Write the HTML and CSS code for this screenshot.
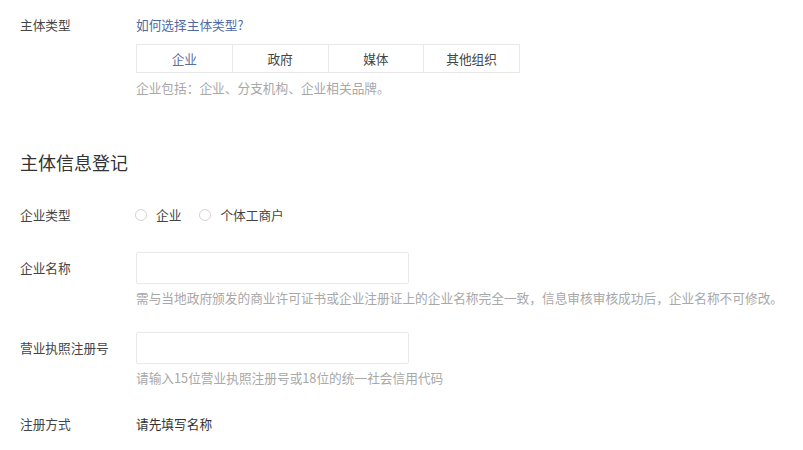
FILE: index.html
```html
<!DOCTYPE html>
<html lang="zh">
<head>
    <meta charset="UTF-8">
    <meta name="viewport" content="width=device-width, initial-scale=1.0">
    <title>主体信息登记</title>
    <link rel="stylesheet" href="styles.css">
</head>
<body>
    <div class="page">
        <div class="row row-type">
            <div class="label">主体类型</div>
            <div class="field">
                <a class="link" href="#">如何选择主体类型?</a>
                <div class="tabs">
                    <div class="tab active">企业</div>
                    <div class="tab">政府</div>
                    <div class="tab">媒体</div>
                    <div class="tab">其他组织</div>
                </div>
                <p class="hint">企业包括：企业、分支机构、企业相关品牌。</p>
            </div>
        </div>

        <h2 class="title">主体信息登记</h2>

        <div class="row row-radio">
            <div class="label">企业类型</div>
            <div class="field radios">
                <label class="radio"><span class="circle"></span>企业</label>
                <label class="radio"><span class="circle"></span>个体工商户</label>
            </div>
        </div>

        <div class="row row-input">
            <div class="label">企业名称</div>
            <div class="field">
                <input class="input" type="text">
                <p class="hint">需与当地政府颁发的商业许可证书或企业注册证上的企业名称完全一致，信息审核审核成功后，企业名称不可修改。</p>
            </div>
        </div>

        <div class="row row-input row-license">
            <div class="label">营业执照注册号</div>
            <div class="field">
                <input class="input" type="text">
                <p class="hint">请输入15位营业执照注册号或18位的统一社会信用代码</p>
            </div>
        </div>

        <div class="row row-method">
            <div class="label">注册方式</div>
            <div class="field value">请先填写名称</div>
        </div>
    </div>
</body>
</html>
```

FILE: styles.css
```css
body {
    font-family: "Noto Sans CJK SC", "Liberation Sans", sans-serif;
    margin: 0;
    background-color: #fff;
    color: #444;
    font-size: 12.7px;
    line-height: 20px;
}
.page {
    padding: 15px 20px 0 20px;
}
.row {
    display: flex;
    align-items: flex-start;
}
.label {
    width: 116px;
    flex-shrink: 0;
    color: #444;
}
.field {
    flex: 1;
}
.link {
    color: #4e6aa6;
    text-decoration: none;
    display: block;
}
.tabs {
    display: flex;
    width: 384px;
    height: 29px;
    margin-top: 9px;
    border: 1px solid #e8e8e8;
    box-sizing: border-box;
}
.tab {
    flex: 1;
    text-align: center;
    line-height: 27px;
    color: #444;
    border-left: 1px solid #e8e8e8;
}
.tab:first-child {
    border-left: none;
}
.tab.active {
    color: #5b6ea6;
}
.hint {
    margin: 5px 0 0 0;
    color: #a8a8a8;
    white-space: nowrap;
}
.title {
    margin: 51px 0 0 0;
    font-size: 18px;
    line-height: 26px;
    font-weight: normal;
    color: #333;
}
.row-radio {
    margin-top: 30px;
}
.radios {
    display: flex;
    gap: 19px;
}
.radio {
    display: flex;
    align-items: center;
    gap: 9px;
    color: #444;
}
.circle {
    width: 12px;
    height: 12px;
    border: 1px solid #d4d4d4;
    border-radius: 50%;
    box-sizing: border-box;
    margin-left: -1px;
}
.row-input {
    margin-top: 27px;
}
.row-input .label {
    line-height: 32px;
}
.row-license {
    margin-top: 24px;
}
.input {
    display: block;
    width: 273px;
    height: 32px;
    margin: 0;
    border: 1px solid #e8e8e8;
    border-radius: 2px;
    box-sizing: border-box;
    outline: none;
}
.row-input .hint {
    margin-top: 4px;
}
.row-method {
    margin-top: 26px;
}
.value {
    color: #333;
}
```
